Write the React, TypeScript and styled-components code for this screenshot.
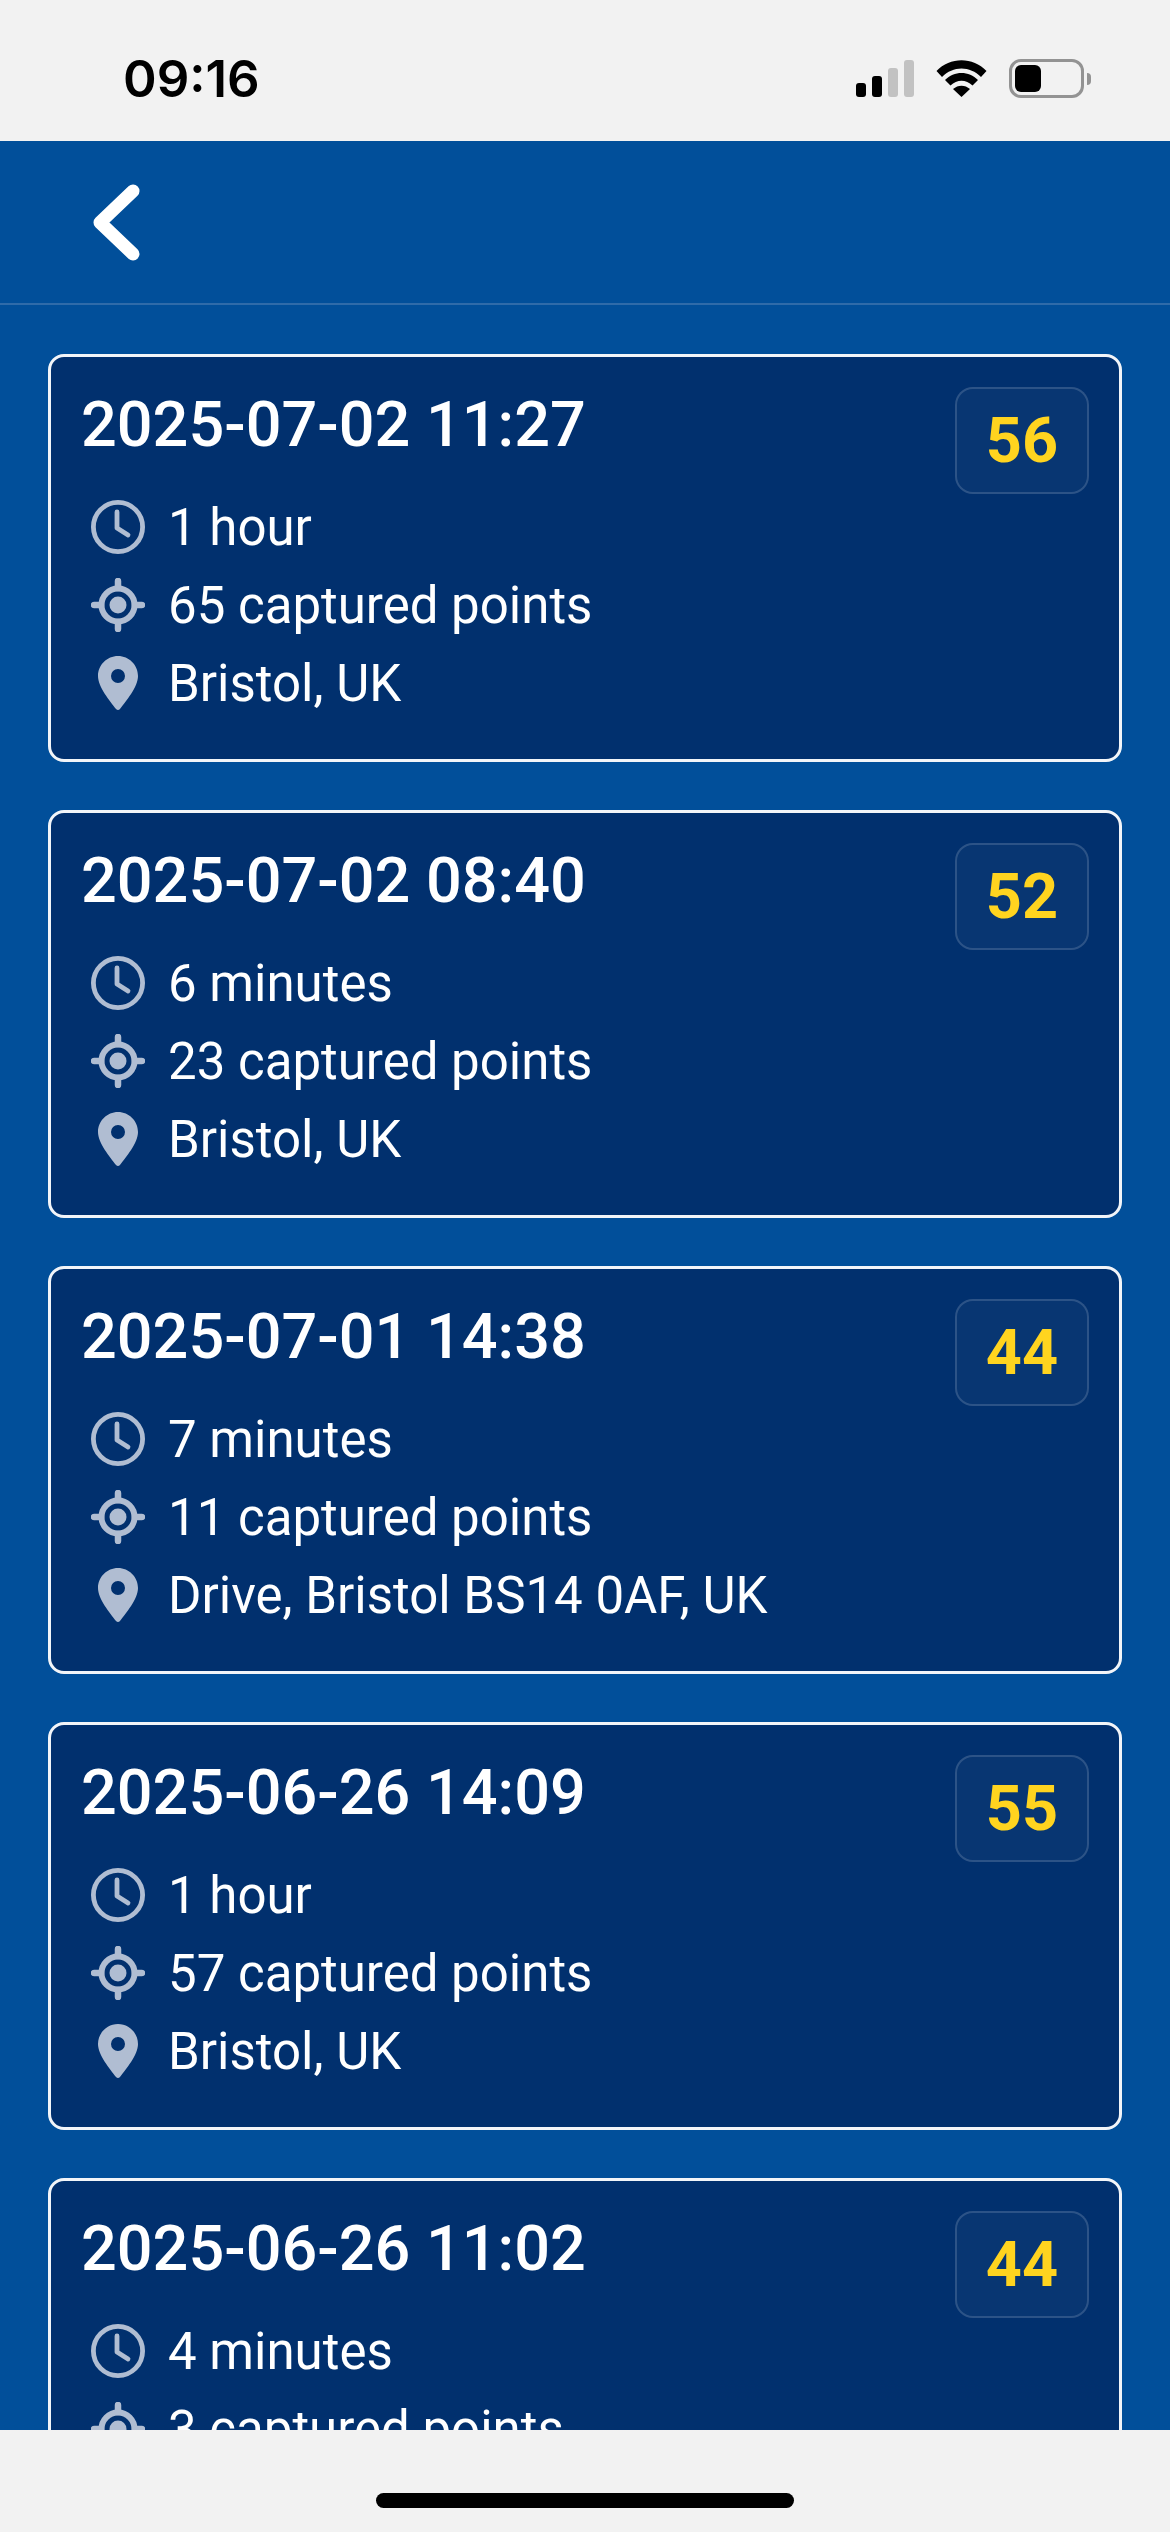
import React from 'react';
import styled, { createGlobalStyle } from 'styled-components';

const sessions = [
  { id: 1, date: '2025-07-02 11:27', time: '1 hour', points: '65 captured points', place: 'Bristol, UK', score: 56 },
  { id: 2, date: '2025-07-02 08:40', time: '6 minutes', points: '23 captured points', place: 'Bristol, UK', score: 52 },
  { id: 3, date: '2025-07-01 14:38', time: '7 minutes', points: '11 captured points', place: 'Drive, Bristol BS14 0AF, UK', score: 44 },
  { id: 4, date: '2025-06-26 14:09', time: '1 hour', points: '57 captured points', place: 'Bristol, UK', score: 55 },
  { id: 5, date: '2025-06-26 11:02', time: '4 minutes', points: '3 captured points', place: 'Bristol, UK', score: 44 },
];

const ClockIcon = () => (
  <svg width="54" height="54" viewBox="0 0 54 54" fill="none" stroke="#b0bdd2" strokeWidth="4.8">
    <circle cx="27" cy="27" r="24.6" />
    <path d="M26 12V28L37 35" strokeLinecap="round" strokeLinejoin="round" />
  </svg>
);

const TargetIcon = () => (
  <svg width="54" height="54" viewBox="0 0 54 54" fill="none" stroke="#b0bdd2">
    <circle cx="27" cy="27" r="16.5" strokeWidth="6" />
    <circle cx="27" cy="27" r="8.5" fill="#b0bdd2" stroke="none" />
    <path d="M27 3V10M27 44V51M3 27H10M44 27H51" strokeWidth="6.5" strokeLinecap="round" />
  </svg>
);

const PinIcon = () => (
  <svg width="54" height="54" viewBox="-7 0 54 54">
    <path
      fill="#b0bdd2"
      fillRule="evenodd"
      d="M20 0C9 0 0 9 0 20C0 31 12 45 18 53Q20 55 22 53C28 45 40 31 40 20C40 9 31 0 20 0ZM20 13A7 7 0 1 1 20 27A7 7 0 1 1 20 13Z"
    />
  </svg>
);

const WifiIcon = () => (
  <svg width="51" height="37" viewBox="0 0 51 37" fill="#000">
    <path d="M0.5 11C14-3.5 37-3.5 50.5 11L45 17C34 5.5 17 5.5 6 17Z" />
    <path d="M9 20C18 10.5 33 10.5 42 20L36.5 25.5C30 19 21 19 14.5 25.5Z" />
    <path d="M17 29C22 24.5 29 24.5 34 29L25.5 37Z" />
  </svg>
);

const BackIcon = () => (
  <svg width="56" height="80" viewBox="0 0 56 80" fill="none" stroke="#fff" strokeWidth="13" strokeLinecap="round" strokeLinejoin="round">
    <path d="M45 9L12 40.5L45 72" />
  </svg>
);

export default function App() {
  return (
    <>
      <GlobalStyle />
      <Screen>
        <StatusBar>
          <Clock>09:16</Clock>
          <StatusIcons>
            <Signal>
              <SignalBar $height={14} $on />
              <SignalBar $height={21} $on />
              <SignalBar $height={29} />
              <SignalBar $height={37} />
            </Signal>
            <WifiIcon />
            <Battery>
              <BatteryLevel />
            </Battery>
          </StatusIcons>
        </StatusBar>
        <Header>
          <BackIcon />
        </Header>
        <List>
          {sessions.map((el) => (
            <Card key={el.id}>
              <CardBody>
                <CardTitle>{el.date}</CardTitle>
                <Rows>
                  <Row>
                    <ClockIcon />
                    {el.time}
                  </Row>
                  <Row>
                    <TargetIcon />
                    {el.points}
                  </Row>
                  <Row>
                    <PinIcon />
                    {el.place}
                  </Row>
                </Rows>
              </CardBody>
              <Score>{el.score}</Score>
            </Card>
          ))}
        </List>
        <BottomBar>
          <HomeBar />
        </BottomBar>
      </Screen>
    </>
  );
}

const GlobalStyle = createGlobalStyle`
  html, body {
    margin: 0;
    padding: 0;
  }
  body {
    font-family: Roboto, "Liberation Sans", sans-serif;
    background: #f2f2f2;
  }
`;

const Screen = styled.div`
  width: 1170px;
  height: 2532px;
  display: flex;
  flex-direction: column;
  overflow: hidden;
`;

const StatusBar = styled.div`
  height: 141px;
  flex: none;
  box-sizing: border-box;
  padding: 15px 79px 0 123px;
  display: flex;
  align-items: center;
  justify-content: space-between;
  background: #f2f2f2;
`;

const Clock = styled.span`
  font: 600 51px/1 Inter, sans-serif;
  color: #000;
`;

const StatusIcons = styled.div`
  display: flex;
  align-items: center;
  gap: 22px;
`;

const Signal = styled.div`
  display: flex;
  align-items: flex-end;
  gap: 6px;
  height: 37px;
`;

const SignalBar = styled.div<{ $height: number; $on?: boolean }>`
  width: 10px;
  height: ${(p) => p.$height}px;
  border-radius: 3px;
  background: ${(p) => (p.$on ? '#000' : '#c2c2c2')};
`;

const Battery = styled.div`
  position: relative;
  box-sizing: border-box;
  width: 75px;
  height: 39px;
  padding: 3px;
  border: 3px solid #939393;
  border-radius: 12px;
  margin-right: 7px;

  &::after {
    content: '';
    position: absolute;
    left: 75px;
    top: 11px;
    width: 4px;
    height: 12px;
    border-radius: 0 6px 6px 0;
    background: #939393;
  }
`;

const BatteryLevel = styled.div`
  width: 26px;
  height: 27px;
  border-radius: 6px;
  background: #000;
`;

const Header = styled.header`
  height: 164px;
  flex: none;
  box-sizing: border-box;
  padding-left: 88px;
  display: flex;
  align-items: center;
  background: #014f9a;
  border-bottom: 2px solid #2f6ba9;
`;

const List = styled.main`
  flex: 1;
  min-height: 0;
  overflow: hidden;
  box-sizing: border-box;
  padding: 49px 48px;
  display: flex;
  flex-direction: column;
  gap: 48px;
  background: #014f9a;
`;

const Card = styled.section`
  flex: none;
  height: 408px;
  box-sizing: border-box;
  padding: 30px 30px 0;
  display: flex;
  justify-content: space-between;
  align-items: flex-start;
  background: #01306e;
  border: 3px solid #f2f5f9;
  border-radius: 16px;
`;

const CardBody = styled.div`
  display: flex;
  flex-direction: column;
`;

const CardTitle = styled.h2`
  margin: 3px 0 0;
  font-size: 63px;
  line-height: 70px;
  font-weight: 500;
  color: #fff;
`;

const Rows = styled.div`
  margin-top: 28px;
  padding-left: 10px;
  display: flex;
  flex-direction: column;
`;

const Row = styled.div`
  height: 78px;
  display: flex;
  align-items: center;
  gap: 23px;
  font-size: 51px;
  color: #fff;
  white-space: nowrap;

  svg {
    flex: none;
  }
`;

const Score = styled.div`
  width: 134px;
  height: 107px;
  box-sizing: border-box;
  display: flex;
  align-items: center;
  justify-content: center;
  font-size: 63px;
  font-weight: 700;
  color: #ffd41f;
  background: rgba(255, 255, 255, 0.03);
  border: 2px solid rgba(255, 255, 255, 0.15);
  border-radius: 18px;
`;

const BottomBar = styled.div`
  height: 102px;
  flex: none;
  box-sizing: border-box;
  padding-top: 63px;
  display: flex;
  justify-content: center;
  align-items: flex-start;
  background: #f2f2f2;
`;

const HomeBar = styled.div`
  width: 418px;
  height: 15px;
  border-radius: 8px;
  background: #000;
`;
